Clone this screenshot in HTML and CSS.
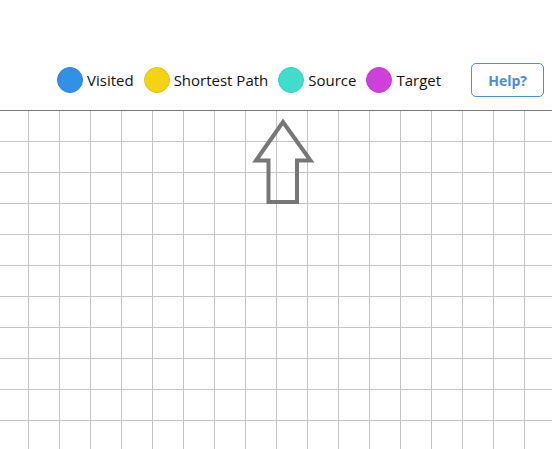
FILE: index.html
```html
<!DOCTYPE html>
<html>
<head>
<meta charset="utf-8">
<link rel="stylesheet" href="styles.css">
</head>
<body>
<header class="header">
  <div class="legend">
    <div class="item"><span class="dot visited"></span><span class="label">Visited</span></div>
    <div class="item"><span class="dot path"></span><span class="label">Shortest Path</span></div>
    <div class="item"><span class="dot source"></span><span class="label">Source</span></div>
    <div class="item"><span class="dot target"></span><span class="label">Target</span></div>
  </div>
  <button class="help">Help?</button>
</header>
<main class="board-wrap">
  <div class="board" id="board"></div>
  <svg class="arrow" width="80" height="100" viewBox="240 111 80 100">
    <path d="M283 122 L256 160.5 L268.5 160.5 L268.5 202 L297 202 L297 160.5 L310.5 160.5 Z" fill="none" stroke="#777777" stroke-width="4" stroke-linejoin="miter"/>
  </svg>
</main>
<script src="script.js"></script>
</body>
</html>
```
FILE: script.js
```js
const board = document.getElementById('board');
for (let i = 0; i < 18 * 11; i++) {
  const c = document.createElement('div');
  c.className = 'cell';
  board.appendChild(c);
}
```
FILE: styles.css
```css
html, body {
  margin: 0;
  padding: 0;
  background: #ffffff;
  overflow: hidden;
  height: 449px;
}
body {
  font-family: "Open Sans", "Noto Sans", sans-serif;
}
.header {
  height: 111px;
  box-sizing: border-box;
  border-bottom: 1px solid #7b7b7b;
  display: flex;
  align-items: center;
  padding: 63px 0 13px 57px;
}
.legend {
  display: flex;
  align-items: center;
}
.item {
  display: flex;
  align-items: center;
  margin-right: 10px;
}
.dot {
  width: 26px;
  height: 26px;
  border-radius: 50%;
  box-sizing: border-box;
  margin-right: 4px;
}
.visited { background: #3290e6; border: 1px solid #2d86d6; }
.path { background: #f5d312; border: 1px solid #e3c21a; }
.source { background: #40dccc; border: 1px solid #38cfc0; }
.target { background: #cf3fdc; border: 1px solid #c13ad0; }
.label {
  font-size: 15px;
  color: #111;
}
.help {
  margin-left: 20px;
  width: 73px;
  height: 34px;
  border: 1px solid #4a90e2;
  border-radius: 5px;
  background: #fff;
  color: #4a8de0;
  font-family: "Open Sans", "Noto Sans", sans-serif;
  font-weight: 700;
  font-size: 14px;
  padding: 0;
}
.board-wrap {
  position: relative;
  display: flex;
  justify-content: center;
}
.board {
  display: grid;
  grid-template-columns: repeat(18, 31px);
  grid-auto-rows: 31px;
  flex: none;
}
.cell {
  box-sizing: border-box;
  border-left: 1px solid #c4c4c4;
  border-bottom: 1px solid #c4c4c4;
}
.arrow {
  position: absolute;
  left: 240px;
  top: 0px;
}
```
